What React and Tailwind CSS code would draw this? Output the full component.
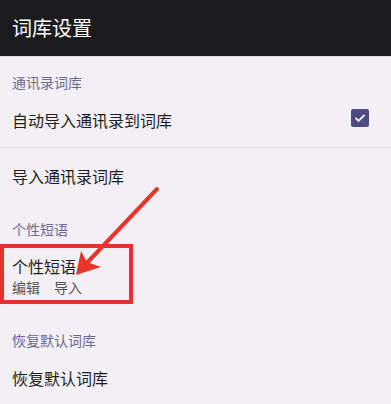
export default function App() {
  const font = { fontFamily: '"Noto Sans CJK SC", "Noto Sans", sans-serif' };
  return (
    <div className="relative w-[391px] h-[404px] overflow-hidden bg-[#f2f0f4]" style={font}>
      <div className="h-[56px] bg-[#1b1b1d] flex items-center pl-3">
        <span className="text-[20px] leading-[24px] text-white">词库设置</span>
      </div>
      <div className="h-px bg-[#e2e0e5]" />
      <div className="pl-3 pt-[15px] text-[14px] leading-[20px] text-[#6e6b8f]">通讯录词库</div>
      <div className="h-[55px] flex items-center justify-between pl-3">
        <span className="text-[16px] leading-[24px] text-[#1f1f1f]">自动导入通讯录到词库</span>
        <div className="mr-[22px] mb-[4px] w-[18px] h-[18px] rounded-[2px] bg-[#4b4a85] flex items-center justify-center">
          <svg width="14" height="14" viewBox="0 0 24 24" fill="none" stroke="white" strokeWidth="3" strokeLinecap="round" strokeLinejoin="round">
            <path d="M5 12.5l4.5 4.5L19 7.5" />
          </svg>
        </div>
      </div>
      <div className="h-px bg-[#e4e2e7]" />
      <div className="h-[56px] flex items-center pl-3">
        <span className="text-[16px] leading-[24px] text-[#1f1f1f]">导入通讯录词库</span>
      </div>
      <div className="pl-3 pt-[15px] text-[14px] leading-[20px] text-[#6e6b8f]">个性短语</div>
      <div className="pl-3 pt-[16px] pb-[8px]">
        <div className="text-[16px] leading-[22px] text-[#1f1f1f]">个性短语</div>
        <div className="flex gap-[14px] text-[14px] leading-[20px] text-[#555458]">
          <span>编辑</span>
          <span>导入</span>
        </div>
      </div>
      <div className="pl-3 pt-[25px] text-[14px] leading-[20px] text-[#6e6b8f]">恢复默认词库</div>
      <div className="pl-3 pt-[16px]">
        <span className="text-[16px] leading-[24px] text-[#1f1f1f]">恢复默认词库</span>
      </div>

      <div className="absolute left-0 top-[244px] w-[133px] h-[60px] border-4 border-[#e8302c]" />
      <svg className="absolute left-0 top-0" width="391" height="404" viewBox="0 0 391 404">
        <line x1="157" y1="189" x2="84" y2="266" stroke="#e8352e" strokeWidth="4" strokeLinecap="round" />
        <polygon points="76,275 81,251 87,262 101,267" fill="#e8352e" />
      </svg>
    </div>
  );
}
